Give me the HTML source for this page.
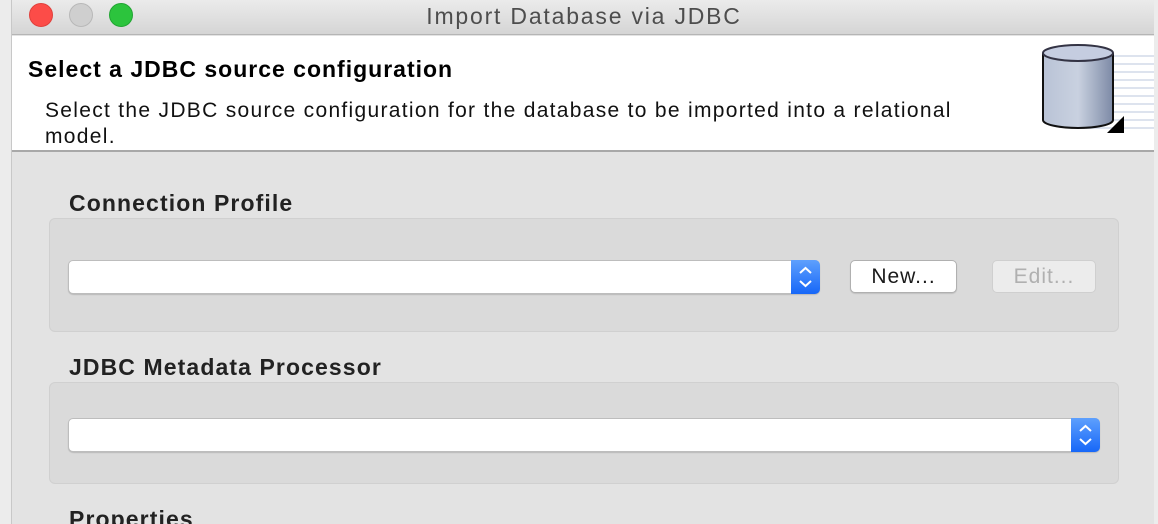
<!DOCTYPE html>
<html><head><style>
*{margin:0;padding:0;box-sizing:border-box}
html,body{width:1158px;height:524px;overflow:hidden}
body{background:#ececec;font-family:"Liberation Sans",sans-serif;position:relative}
.win{position:absolute;left:11px;top:0;width:1143px;height:524px;background:#e3e3e3;border-left:1px solid #c8c8c8;overflow:hidden}
.tb{position:absolute;left:0;top:0;right:0;height:35px;background:linear-gradient(#ebebeb,#d5d5d5);border-bottom:1px solid #b5b5b5}
.tl{position:absolute;top:3px;width:24px;height:24px;border-radius:50%}
.title{position:absolute;top:3px;left:0;right:0;text-align:center;font-size:23px;color:#4d4d4d;letter-spacing:1.8px;padding-left:2px}
.hdr{position:absolute;top:36px;left:0;right:0;height:116px;background:#fff;border-bottom:2px solid #a8a8a8}
.h1{position:absolute;left:16px;top:20px;font-size:23px;font-weight:bold;color:#000;letter-spacing:1px}
.h2{position:absolute;left:33px;top:62px;font-size:21px;line-height:26px;color:#111;width:920px;letter-spacing:1.3px}
.lbl{position:absolute;left:57px;font-size:23px;font-weight:bold;color:#222;letter-spacing:1.1px}
.grp{position:absolute;left:37px;width:1070px;background:#dadada;border:1px solid #d0d0d0;border-radius:6px}
.combo{position:absolute;height:34px;background:#fff;border:1px solid #bdbdbd;border-radius:5px;box-shadow:0 1px 1px rgba(0,0,0,.15)}
.arr{position:absolute;right:-1px;top:-1px;width:29px;height:34px;background:linear-gradient(#5ea0fd,#1767f8);border-radius:0 5px 5px 0;color:#fff}
.btn{position:absolute;height:33px;border-radius:5px;font-size:21px;text-align:center;line-height:31px;letter-spacing:1px}
</style></head><body>
<div class="win">
<div class="tb">
<div class="tl" style="left:17px;background:#fc4c48;border:1px solid #e0403c"></div>
<div class="tl" style="left:57px;background:#cfcfcf;border:1px solid #b8b8b8"></div>
<div class="tl" style="left:97px;background:#2cc43d;border:1px solid #22a533"></div>
<div class="title">Import Database via JDBC</div>
</div>
<div class="hdr">
<div class="h1">Select a JDBC source configuration</div>
<div class="h2">Select the JDBC source configuration for the database to be imported into a relational model.</div>
<svg style="position:absolute;left:1014px;top:4px" width="129" height="108">
<g stroke="#dde3ee" stroke-width="2"><line x1="60" y1="16" x2="129" y2="16"/><line x1="60" y1="24" x2="129" y2="24"/><line x1="60" y1="32" x2="129" y2="32"/><line x1="60" y1="40" x2="129" y2="40"/><line x1="60" y1="48" x2="129" y2="48"/><line x1="60" y1="56" x2="129" y2="56"/><line x1="60" y1="64" x2="129" y2="64"/><line x1="60" y1="72" x2="129" y2="72"/><line x1="60" y1="80" x2="129" y2="80"/><line x1="60" y1="88" x2="129" y2="88"/></g>
<defs><linearGradient id="g" x1="0" x2="1"><stop offset="0" stop-color="#b9c3d6"/><stop offset=".5" stop-color="#c9d1e0"/><stop offset="1" stop-color="#7d8aa6"/></linearGradient></defs>
<path d="M17 13 V80 A35 8 0 0 0 87 80 V13" fill="url(#g)" stroke="#111" stroke-width="2"/>
<ellipse cx="52" cy="13" rx="35" ry="8" fill="#c5cde0" stroke="#334" stroke-width="2"/>
<polygon points="98,76 98,93 81,93" fill="#000"/>
</svg>
</div>
<div class="lbl" style="top:190px">Connection Profile</div>
<div class="grp" style="top:218px;height:114px">
<div class="combo" style="left:18px;top:41px;width:752px"><div class="arr"><svg width="29" height="34"><path d="M9 13 L14.5 8 L20 13 M9 21 L14.5 26 L20 21" stroke="#fff" stroke-width="2" fill="none"/></svg></div></div>
<div class="btn" style="left:800px;top:41px;width:107px;background:#fff;border:1px solid #b0b0b0;color:#1a1a1a;box-shadow:0 1px 1px rgba(0,0,0,.12)">New...</div>
<div class="btn" style="left:942px;top:41px;width:104px;background:#ececec;border:1px solid #cfcfcf;color:#b0b0b0">Edit...</div>
</div>
<div class="lbl" style="top:354px">JDBC Metadata Processor</div>
<div class="grp" style="top:382px;height:102px">
<div class="combo" style="left:18px;top:35px;width:1032px"><div class="arr"><svg width="29" height="34"><path d="M9 13 L14.5 8 L20 13 M9 21 L14.5 26 L20 21" stroke="#fff" stroke-width="2" fill="none"/></svg></div></div>
</div>
<div class="lbl" style="top:506px">Properties</div>
</div>
</body></html>
